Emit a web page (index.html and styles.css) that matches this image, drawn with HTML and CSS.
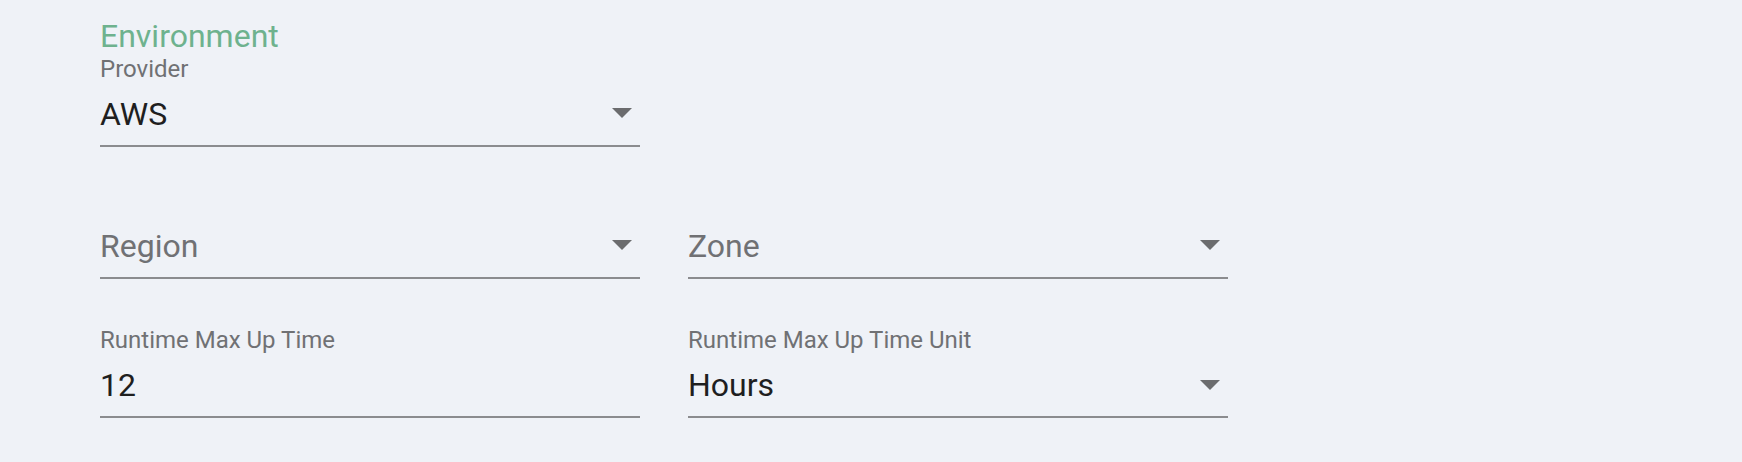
FILE: index.html
```html
<!DOCTYPE html>
<html lang="en">
<head>
<meta charset="utf-8">
<title>Environment</title>
<link rel="stylesheet" href="styles.css">
</head>
<body>
<main class="page">
  <section class="group">
    <h2 class="group-title">Environment</h2>
    <div class="row row-single">
      <div class="field">
        <div class="field-label">Provider</div>
        <div class="field-input">
          <span class="value">AWS</span>
          <svg class="arrow" width="20" height="10" viewBox="0 0 20 10"><polygon points="0,0 20,0 10,10"/></svg>
        </div>
      </div>
    </div>
    <div class="row row-region">
      <div class="field">
        <div class="field-label"></div>
        <div class="field-input">
          <span class="value placeholder">Region</span>
          <svg class="arrow" width="20" height="10" viewBox="0 0 20 10"><polygon points="0,0 20,0 10,10"/></svg>
        </div>
      </div>
      <div class="field">
        <div class="field-label"></div>
        <div class="field-input">
          <span class="value placeholder">Zone</span>
          <svg class="arrow" width="20" height="10" viewBox="0 0 20 10"><polygon points="0,0 20,0 10,10"/></svg>
        </div>
      </div>
    </div>
    <div class="row row-runtime">
      <div class="field">
        <div class="field-label">Runtime Max Up Time</div>
        <div class="field-input">
          <span class="value">12</span>
        </div>
      </div>
      <div class="field">
        <div class="field-label">Runtime Max Up Time Unit</div>
        <div class="field-input">
          <span class="value">Hours</span>
          <svg class="arrow" width="20" height="10" viewBox="0 0 20 10"><polygon points="0,0 20,0 10,10"/></svg>
        </div>
      </div>
    </div>
  </section>
</main>
</body>
</html>
```
FILE: styles.css
```css
html, body {
  margin: 0;
  padding: 0;
}

body {
  background: #eff2f7;
  font-family: Roboto, "Liberation Sans", sans-serif;
  width: 1742px;
  height: 462px;
  overflow: hidden;
}

.page {
  padding: 20px 0 0 100px;
}

.group-title {
  margin: 0 0 2.8px 0;
  font-size: 32px;
  line-height: 32px;
  font-weight: 400;
  color: #6eb28e;
}

.row {
  display: grid;
  grid-template-columns: 540px 540px;
  column-gap: 48px;
}

.row-region {
  margin-top: 40.7px;
}

.row-runtime {
  margin-top: 47.5px;
}

.field {
  display: flex;
  flex-direction: column;
}

.field-label {
  height: 24px;
  padding-top: 2px;
  font-size: 24px;
  line-height: 24px;
  color: #707174;
  margin-bottom: 12.75px;
  white-space: nowrap;
}

.field-input {
  display: flex;
  justify-content: space-between;
  align-items: flex-start;
  height: 40px;
  padding-bottom: 11px;
  border-bottom: 2px solid #8b8c8f;
  font-size: 32px;
  line-height: 40px;
  color: #1f1f1f;
}

.value.placeholder {
  color: #707174;
}

.arrow {
  margin: 14.5px 8px 0 0;
  fill: #6b6c6e;
  flex: none;
}
```
